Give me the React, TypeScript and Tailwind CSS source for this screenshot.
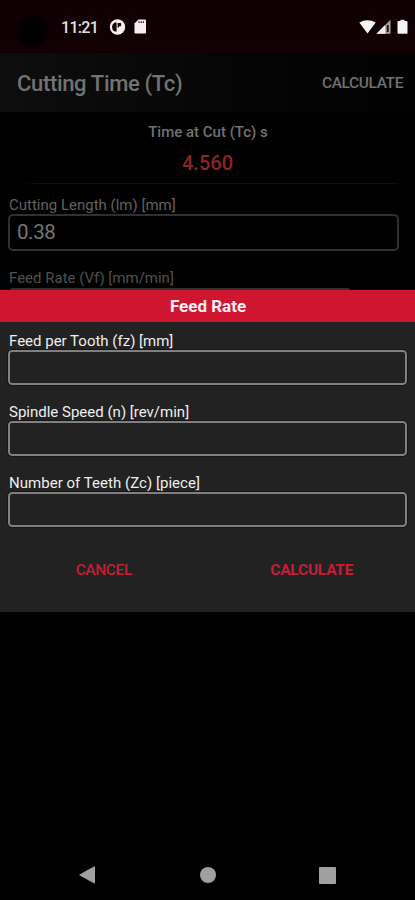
import React from "react";

function StatusBar() {
  return (
    <header className="flex h-[53px] shrink-0 items-start justify-between bg-[#100003] pl-[17px] pr-[7px] pt-[15px]">
      <div className="flex items-start">
        <span className="h-[31px] w-[31px] rounded-full bg-[#030001] blur-[1px]" />
        <span className="ml-[13px] mt-[3px] w-[36px] whitespace-nowrap text-[16px] font-medium leading-5 tracking-[-0.7px] text-[#e4e0e1]">
          11:21
        </span>
        <svg className="ml-[12px] mt-[4px]" width="17" height="16" viewBox="0 0 17 16">
          <circle cx="8.5" cy="8" r="7.7" fill="#f4f0f1" />
          <path d="M7.600 3.400v9.200H5.500Q3 11 3 8t2.500-4.600z" fill="#160205" />
          <path d="M8.600 3.900h3.200q1 1.500 0 3.400H10v1.200H8.600z" fill="#160205" />
        </svg>
        <svg className="ml-[8px] mt-[4px]" width="13" height="16" viewBox="0 0 13 16">
          <path d="M4.500.500H11a1 1 0 0 1 1 1v12a1 1 0 0 1-1 1H1.500a1 1 0 0 1-1-1V4.500z" fill="#f4f0f1" />
          <path d="M5 2.300v1.800M7.200 2.300v1.800M9.400 2.300v1.800" stroke="#3b2c2e" strokeWidth="1.300" />
        </svg>
      </div>
      <div className="mt-[4px] flex">
        <svg width="17" height="16" viewBox="0 0 17 16">
          <path d="M.3 3.600C4.800.300 12 .300 16.700 3.600L8.500 14.600z" fill="#f7f4f5" />
        </svg>
        <svg width="16" height="16" viewBox="0 0 16 16">
          <path d="M.5 14.700L14.500.700v14z" fill="#aaa4a5" />
          <path d="M.5 14.700L9.200 6v8.700z" fill="#f4f0f1" />
          <path d="M10.700 6h2v7h-2z" fill="#251417" />
        </svg>
        <svg className="ml-[5px]" width="11" height="16" viewBox="0 0 11 16">
          <path d="M3.500.800h4V2H9.500a1 1 0 0 1 1 1v10.800a1 1 0 0 1-1 1h-8a1 1 0 0 1-1-1V3a1 1 0 0 1 1-1h2z" fill="#f7f4f5" />
        </svg>
      </div>
    </header>
  );
}

function ModalField({ label, spacing }: { label: string; spacing: string }) {
  return (
    <label className="block h-[71px]">
      <span className={`block h-[19px] whitespace-nowrap pt-px text-[15px] leading-[18px] text-[#eeeeee] ${spacing}`}>
        {label}
      </span>
      <input
        aria-label={label}
        className="block h-[35px] w-full rounded-[4px] border-2 border-[#808080] bg-[#222222] px-2 text-white outline-1 outline-[#161616]"
      />
    </label>
  );
}

export default function App() {
  return (
    <div className="relative flex h-[900px] w-[415px] flex-col overflow-hidden bg-black font-['Roboto',sans-serif]">
      <StatusBar />
      <div className="flex h-[59px] shrink-0 items-center justify-between bg-linear-to-r from-[#0e0e0f] to-[#020202] pl-[17px] pr-[12px] pt-[3px]">
        <h1 className="whitespace-nowrap pb-[2px] text-[22px] font-medium tracking-[-0.34px] text-[#727272]">Cutting Time (Tc)</h1>
        <button className="whitespace-nowrap text-[15.5px] font-medium tracking-[-0.4px] text-[#707070]">CALCULATE</button>
      </div>
      <main className="px-[8px] pt-[10px]">
        <div className="pl-px text-center text-[15px] font-medium leading-5 text-[#717171]">Time at Cut (Tc) s</div>
        <div className="mt-[11px] text-center text-[20px] font-medium leading-5 text-[#8e2423]">4.560</div>
        <div className="mx-[9px] mt-[10px] h-px bg-linear-to-r from-black via-[#260406] via-5% to-[#260406]" />
        <div className="mt-[11px] h-[19px] whitespace-nowrap pl-px pt-px text-[15px] leading-[18px] text-[#606060]">Cutting Length (lm) [mm]</div>
        <div className="flex h-[37px] w-[391px] items-center rounded-[5px] border-2 border-[#303030] pl-[7px] text-[20.5px] tracking-[-0.4px] text-[#747474]">0.38</div>
        <div className="mt-[18px] h-[19px] whitespace-nowrap pl-px text-[15px] leading-[18px] text-[#505050]">Feed Rate (Vf) [mm/min]</div>
        <div className="h-[37px] w-[344px] rounded-[5px] border-2 border-[#303030]" />
      </main>
      <section className="absolute inset-x-0 top-[290px] h-[322px] bg-[#222222]">
        <h2 className="flex h-[32px] items-center justify-center bg-[#d01530] pl-px pt-[2px] text-[17px] font-bold text-[#fff0f1]">Feed Rate</h2>
        <div className="px-[8px] pt-[9px]">
          <ModalField label="Feed per Tooth (fz) [mm]" spacing="pl-px" />
          <ModalField label="Spindle Speed (n) [rev/min]" spacing="pl-px" />
          <ModalField label="Number of Teeth (Zc) [piece]" spacing="pl-px tracking-[0.03px]" />
        </div>
        <div className="flex h-[52px] items-center pt-px text-[#c91c34]">
          <button className="w-1/2 text-[15.5px] font-medium tracking-[-0.4px]">CANCEL</button>
          <button className="w-1/2 pl-px text-[15.5px] font-bold tracking-[-0.25px]">CALCULATE</button>
        </div>
      </section>
      <nav className="mt-auto flex h-[50px] shrink-0 items-center justify-between pl-[79px] pr-[79px]">
        <svg width="17" height="18" viewBox="0 0 17 18">
          <path d="M15.500.700v16.400L.700 8.900z" fill="#a0a0a0" stroke="#a0a0a0" strokeWidth="1" strokeLinejoin="round" />
        </svg>
        <span className="h-4 w-4 rounded-full bg-[#a0a0a0]" />
        <span className="h-[17px] w-[17px] rounded-[1px] bg-[#a0a0a0]" />
      </nav>
    </div>
  );
}
